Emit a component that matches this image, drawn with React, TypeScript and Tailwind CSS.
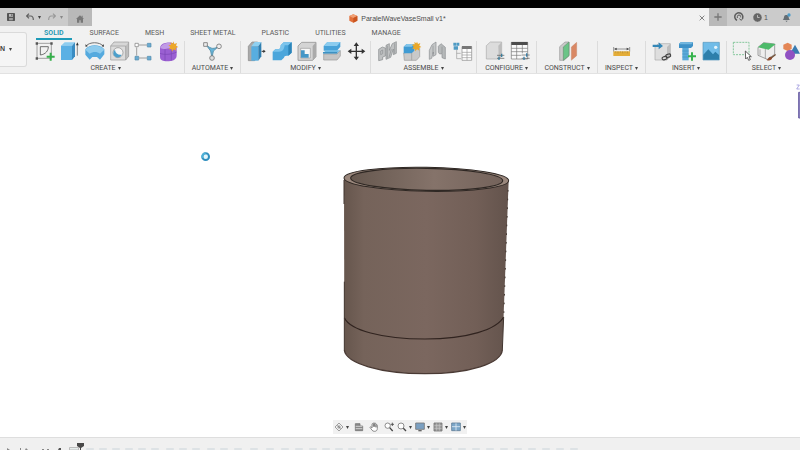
import type { ReactNode } from "react";

function Caret({ className = "text-[#444]" }: { className?: string }) {
  return (
    <svg aria-hidden="true" viewBox="0 0 6 6" className={`h-[3px] w-[3px] shrink-0 ${className}`}>
      <path d="M0 0h6L3 6z" fill="currentColor" />
    </svg>
  );
}

function Tool({ name, box, children }: { name: string; box: string; children: ReactNode }) {
  return (
    <button type="button" aria-label={name} className="h-5 w-[25px] shrink-0">
      <svg viewBox={box} className="h-5 w-[25px] overflow-visible" fill="none" strokeLinejoin="round">
        {children}
      </svg>
    </button>
  );
}

function Group({ label, width, children }: { label: string; width: string; children: ReactNode }) {
  return (
    <section className={`flex shrink-0 flex-col items-center border-r border-[#dcdcdc] ${width}`}>
      <div className="flex">{children}</div>
      <button type="button" className="flex h-3 items-center gap-[2px] whitespace-nowrap pt-[2px] font-['Roboto',sans-serif] text-[7px] leading-[10px] text-[#4a4a4a]">
        {label}
        <Caret />
      </button>
    </section>
  );
}

function TitleBar() {
  return (
    <header className="flex h-[18px] shrink-0 bg-[#f1f1f1]">
      <div className="flex w-[92px] shrink-0 items-center bg-[#cbcbcb]">
        <button type="button" aria-label="Save" className="ml-[7px] w-2">
          <svg viewBox="0 0 24 24" className="h-2 w-2" fill="#555">
            <path d="M2 0h20a2 2 0 0 1 2 2v20a2 2 0 0 1-2 2H2a2 2 0 0 1-2-2V2a2 2 0 0 1 2-2z" />
            <path d="M6 3h12v8H6zM7 15h10v7H7z" fill="#b9b9b9" />
            <path d="M13 4h3v5h-3zM9 17h6v2H9z" />
          </svg>
        </button>
        <button type="button" aria-label="Undo" className="ml-[11px] w-2">
          <svg viewBox="0 0 24 24" className="h-2 w-2" fill="none" stroke="#606060" strokeWidth="3.5">
            <path d="M9 2 2 9l7 7M3 9h11c6 0 8 5 8 12" />
          </svg>
        </button>
        <button type="button" aria-label="Undo history" className="ml-1 flex w-1">
          <Caret />
        </button>
        <button type="button" aria-label="Redo" className="ml-[6px] w-2">
          <svg viewBox="0 0 24 24" className="h-2 w-2" fill="none" stroke="#999" strokeWidth="3.5">
            <path d="m15 2 7 7-7 7M21 9H10c-6 0-8 5-8 12" />
          </svg>
        </button>
        <button type="button" aria-label="Redo history" className="ml-1 flex w-1">
          <Caret className="text-[#888]" />
        </button>
        <button type="button" aria-label="Home" className="ml-1 flex h-full w-6 items-center justify-center bg-[#b9b9b9] pt-[3px]">
          <svg viewBox="0 0 24 24" className="h-2 w-2" fill="#777">
            <path d="M12 1 0 12h3v11h7v-7h4v7h7V12h3l-4-4V2h-3v4z" />
          </svg>
        </button>
      </div>
      <div className="flex min-w-0 flex-1 items-center">
        <div className="flex flex-1 items-center justify-center gap-[3px] pl-1 pt-[3px]">
          <svg viewBox="0 0 27 27" className="h-[9px] w-[9px]" aria-hidden="true">
            <path d="m13 1 12 5v14l-12 6L1 20V6z" fill="#e2703a" />
            <path d="m13 1 12 5-12 6L1 6z" fill="#f0a074" />
            <path d="m13 12 12-6v14l-12 6z" fill="#c9541f" />
          </svg>
          <h1 className="whitespace-nowrap font-['Liberation_Sans',sans-serif] text-[7px] leading-[9px] text-[#4c4c4c]">
            ParalelWaveVaseSmall v1*
          </h1>
        </div>
        <button type="button" aria-label="Close tab" className="mr-1 w-[6px] pt-[2px]">
          <svg viewBox="0 0 18 18" className="h-[6px] w-[6px]" stroke="#666" strokeWidth="2.4">
            <path d="m2 2 14 14M16 2 2 16" />
          </svg>
        </button>
      </div>
      <div className="flex w-[91px] shrink-0 items-center bg-[#cbcbcb]">
        <button type="button" aria-label="New tab" className="flex h-full w-[18px] items-center justify-center bg-[#b9b9b9]">
          <svg viewBox="0 0 24 24" className="h-2 w-2" stroke="#777" strokeWidth="4">
            <path d="M12 1v22M1 12h22" />
          </svg>
        </button>
        <button type="button" aria-label="Extensions" className="ml-[7px] w-[10px]">
          <svg viewBox="0 0 30 30" className="h-[10px] w-[10px]" fill="none" stroke="#5c5c5c" strokeWidth="4.5">
            <path d="M9 25A12 12 0 1 1 25 20" />
            <path d="M10 18v-4a5 5 0 0 1 10 0v2M16 20l6 5 5-7" strokeWidth="3" />
          </svg>
        </button>
        <button type="button" aria-label="Jobs" className="ml-[9px] flex items-center gap-[2px] font-['Liberation_Sans',sans-serif] text-[7px] leading-[9px] text-[#555]">
          <svg viewBox="0 0 30 30" className="h-[9px] w-[9px]">
            <circle cx="15" cy="15" r="13" fill="#666" stroke="#666" strokeWidth="3" strokeDasharray="4 2" />
            <path d="M15 7v8h7" fill="none" stroke="#d6d6d6" strokeWidth="2.5" />
          </svg>
          1
        </button>
        <button type="button" aria-label="Notifications" className="ml-[14px] w-[9px]">
          <svg viewBox="0 0 27 27" className="h-[9px] w-[9px]">
            <path d="M2 21c4-3 3-7 5-12 2-4 10-4 12 0 2 5 1 9 5 12zM10 23h7l-3 4z" fill="#646c72" />
            <circle cx="21" cy="6" r="5" fill="#4b9bc9" />
          </svg>
        </button>
      </div>
    </header>
  );
}

const tabs = ["SURFACE", "MESH", "SHEET METAL", "PLASTIC", "UTILITIES", "MANAGE"];

function Ribbon() {
  return (
    <div className="flex h-12 shrink-0 overflow-hidden border-b border-[#e2e2e2] bg-[#f1f1f1]">
      <button type="button" className="mb-[6px] mt-[6px] flex w-[27px] shrink-0 items-center gap-1 rounded-r-[3px] border border-l-0 border-[#dadada] bg-[#f5f5f5] font-['Liberation_Sans',sans-serif] text-[7px] font-bold text-[#444]">
        N
        <Caret />
      </button>
      <div className="min-w-0 flex-1">
        <nav className="flex gap-[10px] pl-[9px] font-['Roboto',sans-serif] text-[7px] leading-[9px] text-[#5a5a5a]">
          <button type="button" className="h-[14px] border-b-2 border-[#1e9bb8] px-2 pt-[3px] font-bold text-[#2b9ab5]">
            SOLID
          </button>
          {tabs.map((tab) => (
            <button key={tab} type="button" className="h-[14px] whitespace-nowrap border-b-2 border-transparent px-2 pt-[3px]">
              {tab}
            </button>
          ))}
        </nav>
        <div className="flex pt-px">
          <Group label="CREATE" width="w-[158px]">
            <Tool name="Create sketch" box="93 123 75 60">
              <path d="M111 130h43v45h-43z" stroke="#777" strokeWidth="2" />
              <path d="M121 140h24c0 12-8 23-24 25z" stroke="#555" strokeWidth="2.5" />
              <path d="M107 127h7v7h-7zM151 127h7v7h-7zM107 172h7v7h-7z" fill="#555" />
              <path d="M152 158v24M140 170h24" stroke="#35b04a" strokeWidth="6" />
            </Tool>
            <Tool name="Extrude" box="168 123 75 60">
              <path d="m183 137 11-10h31l-9 10z" fill="#8ecdf0" />
              <path d="M183 137h33v43h-33z" fill="#5bb0e4" />
              <path d="m216 137 9-10v42l-9 11z" fill="#3a8cc2" />
              <path d="M232 133v34" stroke="#555" strokeWidth="2" />
              <path d="m228 136 4-9 4 9z" fill="#333" />
            </Tool>
            <Tool name="Revolve" box="243 123 75 60">
              <path d="M256 148c12-16 44-16 57 0v15l-13 16-9-8h-14l-8 8-13-15z" fill="#55aade" />
              <path d="M256 149c12-16 44-16 57 0l-13 12c-8-7-22-7-31 0z" fill="#8ecbed" />
              <path d="M258 138c11-13 40-13 52 0" stroke="#555" strokeWidth="2.5" />
              <path d="m256 133 1 8 7-3zM312 133l-1 8-7-3z" fill="#444" />
            </Tool>
            <Tool name="Hole" box="318 123 75 60">
              <path d="m332 138 10-12h44l-9 12z" fill="#e4e4e4" />
              <path d="m377 138 9-12v43l-9 11z" fill="#a7a7a7" />
              <path d="M332 138h45v42h-45zM332 138l10-12h44v43l-9 11" stroke="#979797" strokeWidth="2" fill="#cfcfcf" fillOpacity=".6" />
              <circle cx="354" cy="158" r="15" fill="#f4f4f4" stroke="#888" strokeWidth="2" />
              <path d="M345 149a13 13 0 1 0 20 15c-10 2-19-4-20-15z" fill="#4b9fcb" />
            </Tool>
            <Tool name="Pattern" box="393 123 75 60">
              <path d="M417 135h24M410 142v25M417 174h24" stroke="#777" strokeWidth="2" />
              <path d="M405 130h10v10h-10z" fill="#fff" stroke="#777" strokeWidth="2" />
              <path d="M442 130h11v11h-11zM405 169h11v11h-11zM442 169h11v11h-11z" fill="#69abd2" stroke="#568caa" strokeWidth="2" />
            </Tool>
            <Tool name="Create form" box="468 123 75 60">
              <path d="M480 146c0-11 9-17 20-18 14-2 30 3 30 14v24c0 11-8 16-18 17-18 2-32 0-32-13z" fill="#9a5fd2" />
              <path d="M481 144c2-9 14-16 27-15l14 7c-4 10-30 14-41 8z" fill="#c19be6" />
              <path d="M480 160c12 5 35 4 50-4M495 148v34M514 146v36" stroke="#7a45b3" strokeWidth="2" />
              <path d="m520 124 3 8 8-3-3 8 7 4-8 3 2 8-8-4-5 7-2-8-8 1 5-7-6-6 8-1-1-8 6 5z" fill="#eca729" />
            </Tool>
          </Group>
          <Group label="AUTOMATE" width="w-[56px]">
            <Tool name="Automated modeling" box="61 123 75 60">
              <path d="m79 134 14 19 4 20 4-20 16-14c-13 8-22 10-38-5z" fill="#65b5da" stroke="#5c94ae" strokeWidth="3" />
              <path d="M72 128h11v11H72z" fill="#eee" stroke="#777" strokeWidth="2.5" />
              <circle cx="118" cy="139" r="7" fill="#eee" stroke="#777" strokeWidth="2.5" />
              <circle cx="97" cy="174" r="7" fill="#ddd" stroke="#777" strokeWidth="2.5" />
            </Tool>
          </Group>
          <Group label="MODIFY" width="w-[130px]">
            <Tool name="Press pull" box="190 123 75 60">
              <path d="m206 139 11-13h17v43l-9 13h-19z" fill="#aaa" stroke="#888" strokeWidth="2" />
              <path d="m215 139 10-13h20l-9 13z" fill="#8fd0f1" />
              <path d="M215 139h21v43h-21z" fill="#58aee0" />
              <path d="m236 139 9-13v43l-9 13z" fill="#2f7fb1" />
              <path d="M246 154h8" stroke="#333" strokeWidth="3" />
              <path d="m251 149 7 5-7 5z" fill="#333" />
            </Tool>
            <Tool name="Fillet" box="265 123 75 60">
              <path d="M279 155l8-7h6c8 0 10-3 10-12l9-9h24v31l-10 9h-5c-6 0-7 2-8 6l-8 8h-26z" fill="#4ba6db" />
              <path d="m279 155 8-7h6c8 0 10-3 10-12l9-9h24l-10 9h-11c-2 13-6 19-17 19z" fill="#7cc4ec" />
              <path d="m326 136 10-9v31l-10 9z" fill="#2c84b8" />
            </Tool>
            <Tool name="Shell" box="340 123 75 60">
              <path d="m355 138 11-11h43v43l-10 11h-44z" fill="#d4d4d4" stroke="#989898" strokeWidth="2.5" />
              <path d="m399 138 10-11v43l-10 11z" fill="#aaa" />
              <path d="M363 145h29v29h-29z" fill="#f7f7f7" stroke="#999" strokeWidth="2" />
              <path d="M364 151h11v11h12v11h-23z" fill="#4597c7" />
            </Tool>
            <Tool name="Split body" box="415 123 75 60">
              <path d="m432 138 11-12h39v14l-10 12h-40z" fill="#48a2d8" />
              <path d="m432 138 11-12h39l-10 12z" fill="#8bccef" />
              <path d="m430 158 10-7h43l-10 7z" fill="#6ebbe5" />
              <path d="M432 162h40l10-10v16l-10 12h-40z" fill="#c5c5c5" stroke="#999" strokeWidth="2" />
              <path d="M430 156h43v5h-43z" fill="#3e91c1" />
            </Tool>
            <Tool name="Move" box="490 123 75 60">
              <path d="M530 134v42M510 154h41" stroke="#333" strokeWidth="4" />
              <path d="m530 127 8 11h-16zM530 181l8-11h-16zM504 154l11-8v16zM557 154l-11-8v16z" fill="#333" />
            </Tool>
          </Group>
          <Group label="ASSEMBLE" width="w-[106px]">
            <Tool name="Insert derive" box="42 123 75 60">
              <path d="m56 148 11-7 9 3v24l-8 3v8l-12 3zM78 136l10-5v20l9-20 12-6v35l-9 4v-17l-8 25-14 6z" fill="#bfc1c2" stroke="#85898b" strokeWidth="2" />
              <path d="m62 153 6-3v11l-6 3zM82 137v38M94 148l-7 24M104 130v31" stroke="#8d9092" strokeWidth="2" />
            </Tool>
            <Tool name="New component" box="117 123 75 60">
              <path d="m155 154 9-9h15v25l-10 11h-36l-2-22z" fill="#c9c9c9" stroke="#999" strokeWidth="2" />
              <path d="m131 140 9-8h23v20l-8 8h-24z" fill="#409bd3" />
              <path d="m131 140 9-8h23l-8 8z" fill="#83c5ea" />
              <path d="M155 159v22" stroke="#999" strokeWidth="2" />
              <path d="m171 125 3 7 7-3-3 8 6 4-7 3 1 8-7-4-5 6-2-8-7 1 4-7-5-6 8-1-1-7 6 4z" fill="#eaa829" />
            </Tool>
            <Tool name="Joint" box="192 123 75 60">
              <path d="m208 151 8-17 12-8v38l-8 5v-13l-5 19-7 3z" fill="#c4c6c7" stroke="#898d8f" strokeWidth="2" />
              <path d="m235 139 8-8 13 11v35l-10-4v-12l-7 1-4-5z" fill="#b6b9ba" stroke="#898d8f" strokeWidth="2" />
              <path d="M219 137v25M246 140v20" stroke="#8d9092" strokeWidth="2" />
            </Tool>
            <Tool name="Bill of materials" box="267 123 75 60">
              <path d="M280 128h9v9h-9zM290 128h8v9h-8zM281 139h13v10h-13z" fill="#4f9bc4" />
              <path d="M290 149v27h13M290 160h12" stroke="#999" strokeWidth="2" />
              <path d="M306 140h29v41h-29z" fill="#fff" stroke="#888" strokeWidth="2" />
              <path d="M306 138h29v9h-29z" fill="#777" />
              <path d="M306 157h29M306 165h29M306 173h29M321 147v34" stroke="#999" strokeWidth="2" />
            </Tool>
          </Group>
          <Group label="CONFIGURE" width="w-[60px]">
            <Tool name="Configure model" box="366 123 75 60">
              <path d="m379 137 12-11h34v42l-9 9h-37z" fill="#dcdcdc" stroke="#aaa" strokeWidth="2" />
              <path d="m415 137 10-11v42l-9 9z" fill="#bdbdbd" />
              <path d="M411 166h22M411 175h22" stroke="#555" strokeWidth="2" />
              <path d="M425 161v10M417 170v10" stroke="#397f9f" strokeWidth="4" />
            </Tool>
            <Tool name="Configuration table" box="441 123 75 60">
              <path d="M454 127h49v50h-49z" fill="#fafafa" stroke="#777" strokeWidth="2" />
              <path d="M454 126h49v9h-49z" fill="#4c4c4c" />
              <path d="M454 145h49M454 155h49M454 166h30M470 135v42M487 135v25" stroke="#777" strokeWidth="2" />
              <path d="M485 165h24M485 175h24" stroke="#555" strokeWidth="2" />
              <path d="M500 160v10M492 170v10" stroke="#397fa7" strokeWidth="4" />
            </Tool>
          </Group>
          <Group label="CONSTRUCT" width="w-[61px]">
            <Tool name="Offset plane" box="45 123 75 60">
              <path d="m59 140 16-14h12v41l-15 14H59z" fill="#c9c9c9" stroke="#999" strokeWidth="2" />
              <path d="m70 141 17-15v41l-17 14z" fill="#6bc487" stroke="#65936f" strokeWidth="2" />
              <path d="m94 141 16-14v40l-16 14z" fill="#d98865" stroke="#bd785a" strokeWidth="1" />
            </Tool>
          </Group>
          <Group label="INSPECT" width="w-[48px]">
            <Tool name="Measure" box="209 123 75 60">
              <path d="M223 141v14M271 141v14M227 147h40" stroke="#666" strokeWidth="2" />
              <path d="m224 147 8-4v8zM270 147l-8-4v8z" fill="#444" />
              <path d="M222 154h50v14h-50z" fill="#e4ad38" />
              <path d="M229 154v4M236 154v6M243 154v4M250 154v6M257 154v4M264 154v6" stroke="#b08832" strokeWidth="2" />
            </Tool>
          </Group>
          <Group label="INSERT" width="w-[81px]">
            <Tool name="Insert component" box="27 123 75 60">
              <path d="m45 141 10-10h36v37l-10 12H45z" fill="#dedede" stroke="#aaa" strokeWidth="2" />
              <path d="m81 141 10-10v37l-10 12z" fill="#bdbdbd" />
              <path d="M38 134h18v-7l13 11-13 10v-7H38z" fill="#3487b7" />
              <g stroke="#444" strokeWidth="3.5">
                <rect x="66" y="170" width="15" height="9" rx="4.5" transform="rotate(-18 73 174)" />
                <rect x="77" y="163" width="15" height="9" rx="4.5" transform="rotate(-18 84 167)" />
              </g>
            </Tool>
            <Tool name="Insert fastener" box="102 123 75 60">
              <path d="m117 131 5-4h37v11l-6 6h-36z" fill="#3e91c7" />
              <path d="m117 131 5-4h37l-5 6h-37z" fill="#72b7df" />
              <path d="M127 144h19v37h-19z" fill="#5aaada" />
              <path d="M127 153h19M127 162h19M127 171h19" stroke="#4491bf" strokeWidth="2" />
              <path d="M156 157v25M144 169h24" stroke="#36b34d" strokeWidth="6" />
            </Tool>
            <Tool name="Insert image" box="177 123 75 60">
              <path d="M189 127h49v53h-49z" fill="#70bce8" stroke="#5295bb" strokeWidth="2" />
              <path d="m190 164 15-16 14 15 7-8 11 10v14h-47z" fill="#2d7fab" />
              <circle cx="227" cy="142" r="5" fill="#e6f4fb" />
            </Tool>
          </Group>
          <Group label="SELECT" width="w-[80px]">
            <Tool name="Select" box="268 123 75 60">
              <path d="M281 127h47v37h-47z" stroke="#6fbe8a" strokeWidth="2.5" strokeDasharray="6 3" />
              <path d="m317 153 1 24 5-5 4 9 5-2-4-9h7z" fill="#fff" stroke="#444" strokeWidth="2.5" />
            </Tool>
            <Tool name="Paint select" box="343 123 75 60">
              <path d="m355 142 17-14 33 4v31l-22 15-28-12z" fill="#eee" stroke="#777" strokeWidth="2" />
              <path d="m355 142 17-14 36 4-21 17z" fill="#4dba6a" />
              <path d="M377 147v29M361 148v18" stroke="#888" strokeWidth="2" />
              <path d="m407 162 2 3-16 13-4-3z" fill="#705038" />
              <path d="M393 170c-8 0-6 9-13 9 7 5 16 2 17-4z" fill="#8e4a2c" />
            </Tool>
            <Tool name="Selection filters" box="418 123 75 60">
              <path d="m444 128 12 6v13l-12 6-13-6v-13z" fill="#e48656" />
              <path d="m466 134 15 27h-30z" fill="#397ab0" />
              <circle cx="451" cy="165" r="15" fill="#9051c2" />
            </Tool>
          </Group>
        </div>
      </div>
    </div>
  );
}

function Vase() {
  return (
    <svg role="img" aria-label="Vase model" viewBox="30 39 516 648" className="absolute left-[340px] top-[89px] h-[216px] w-[172px]">
      <defs>
        <linearGradient id="body" x1="0" x2="1">
          <stop offset="0" stopColor="#66564d" />
          <stop offset=".12" stopColor="#75635a" />
          <stop offset=".5" stopColor="#7b675f" />
          <stop offset=".8" stopColor="#725f57" />
          <stop offset="1" stopColor="#63534c" />
        </linearGradient>
        <linearGradient id="inside" x1="0" x2="1">
          <stop offset="0" stopColor="#66584f" />
          <stop offset=".55" stopColor="#85736a" />
          <stop offset="1" stopColor="#74635b" />
        </linearGradient>
      </defs>
      <path d="M42 86 43 600C48 640 150 671 285 671S513 640 517 600L536 92z" fill="url(#body)" />
      <g transform="rotate(1 289 88)" stroke="#2f2824">
        <ellipse cx="289" cy="88" rx="247" ry="36" fill="#9a877c" strokeWidth="3" />
        <ellipse cx="290" cy="88" rx="228" ry="33" fill="url(#inside)" strokeWidth="3.5" />
      </g>
      <path d="M43 503C60 540 155 567 285 567S500 538 521 501" fill="none" stroke="#30231f" strokeWidth="3.5" />
      <path d="M43 600C48 640 150 671 285 671S513 640 517 600" fill="none" stroke="#4a3a34" strokeWidth="4" />
      <path d="M42 90v72M43 395v205M521 501l-4 99" fill="none" stroke="#41352f" strokeWidth="3" />
      <path d="M534 120 521 501" fill="none" stroke="#41352f" strokeWidth="3" strokeDasharray="5 21" />
    </svg>
  );
}

function NavButton({ name, menu = false, children }: { name: string; menu?: boolean; children: ReactNode }) {
  return (
    <button type="button" aria-label={name} className="flex items-center gap-[2px]">
      <svg viewBox="0 0 30 30" className="h-[10px] w-[10px]" fill="none" stroke="#777" strokeWidth="2.5">
        {children}
      </svg>
      {menu && <Caret />}
    </button>
  );
}

function NavigationBar() {
  return (
    <div className="mt-auto mb-[3px] flex h-[14px] items-center gap-[3px] bg-[#f1f1f1] px-px">
      <NavButton name="Orbit" menu>
        <path d="m15 3 12 12-12 12L3 15zM10 10l10 10M15 9v12M9 15h12" strokeWidth="2" />
      </NavButton>
      <span className="flex px-[2px]">
        <NavButton name="Look at">
          <path d="M4 5h14v7h8v14H4z" fill="#888" />
          <path d="M5 13h20M5 20h20" stroke="#ddd" />
        </NavButton>
      </span>
      <NavButton name="Pan">
        <path d="M9 18V7c0-3 4-3 4 0v7-9c0-4 4-4 4 0v9-8c0-3 4-3 4 0v10-6c0-3 4-3 4 0v9c0 6-3 9-9 9-6 0-8-5-13-12 1-3 4-2 6 2z" fill="#fff" />
      </NavButton>
      <span className="flex pl-[2px]">
        <NavButton name="Zoom">
          <circle cx="11" cy="11" r="8" fill="#fff" />
          <path d="m17 17 9 10" stroke="#444" strokeWidth="4" />
          <path d="M25 2v10M20 7h10" stroke="#444" />
        </NavButton>
      </span>
      <NavButton name="Fit" menu>
        <circle cx="12" cy="12" r="9" fill="#fff" />
        <path d="m19 19 8 8" stroke="#444" strokeWidth="4" />
      </NavButton>
      <NavButton name="Display settings" menu>
        <path d="M2 3h26v19H2z" fill="#7ba0c2" />
        <path d="M10 26h10" stroke="#666" strokeWidth="4" />
      </NavButton>
      <NavButton name="Grid and snaps" menu>
        <path d="M3 3h24v24H3z" fill="#999" />
        <path d="M4 11h22M4 19h22M11 4v22M19 4v22" stroke="#c8c8c8" strokeWidth="2" />
      </NavButton>
      <NavButton name="Viewports" menu>
        <path d="M2 3h26v23H2z" fill="#7ba6c8" stroke="#607e97" />
        <path d="M15 4v22M3 14h24" stroke="#e0ebf4" />
      </NavButton>
    </div>
  );
}

function Canvas() {
  return (
    <main className="relative flex min-h-0 flex-1 flex-col items-center overflow-hidden bg-white">
      <svg role="img" aria-label="Busy" viewBox="0 0 30 30" className="absolute left-[201px] top-[78px] h-[10px] w-[10px]" fill="none">
        <circle cx="14" cy="14" r="10" fill="#e4f6fb" stroke="#2f8fbe" strokeWidth="6" />
        <path d="M5 18A10 10 0 0 1 14 4" stroke="#4fb2d8" strokeWidth="6" />
      </svg>
      <Vase />
      <svg aria-hidden="true" viewBox="0 0 12 120" className="absolute right-0 top-2 h-10 w-1" fill="none">
        <path d="M2 9h8L2 21h9" stroke="#8a82d8" strokeWidth="2" />
        <path d="M12 31H8v77h4" fill="#8b80bd" stroke="#6a61a4" strokeWidth="3" />
      </svg>
      <NavigationBar />
    </main>
  );
}

const features = [
  86, 99, 112, 125, 138, 151, 166, 179, 192, 207, 220, 234, 250, 266, 281, 295,
  309, 322, 335, 348, 362, 376, 390, 404, 418, 431, 444, 458, 472, 486, 500, 514, 528, 542, 556, 570,
];

function Timeline() {
  return (
    <footer className="h-[13px] shrink-0 overflow-hidden border-t border-[#dedede] bg-[#f0f0f0]">
      <svg role="img" aria-label="Design timeline" viewBox="0 0 600 12" className="h-3 w-[600px]">
        <path d="M7 10l3 2H7zM20 10h1v2h-1zM26 10l2 2h-3zM42 11h2v1h-2zM47 11h2v1h-2z" fill="#888" />
        <path d="M59 10h2v2h-3z" fill="#555" />
        <path d="M69.500 9.500h9V12h-9z" fill="#e5eceb" stroke="#bbb" />
        {features.map((x) => (
          <rect key={x} x={x} y="10" width="8" height="2" rx="1" fill="#dde2e5" />
        ))}
        <path d="M77 5h7v3l-3 2v2h-1v-2l-3-2z" fill="#484848" />
      </svg>
    </footer>
  );
}

export default function App() {
  return (
    <div className="flex h-screen flex-col overflow-hidden border-t-8 border-black bg-white font-['Liberation_Sans',sans-serif]">
      <TitleBar />
      <Ribbon />
      <Canvas />
      <Timeline />
    </div>
  );
}
